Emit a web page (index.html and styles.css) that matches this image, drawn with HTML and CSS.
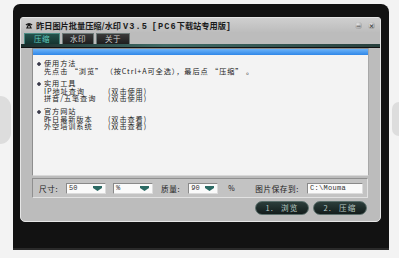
FILE: index.html
```html
<!DOCTYPE html>
<html lang="zh-CN">
<head>
    <meta charset="UTF-8">
    <title>昨日图片批量压缩/水印 V3.5</title>
    <link rel="stylesheet" href="styles.css">
</head>
<body>
    <div class="blob blob-left"></div>
    <div class="blob blob-right"></div>
    <div class="screen">
        <div class="window">
            <div class="titlebar">
                <svg class="app-icon" width="8" height="7" viewBox="0 0 8 7">
                    <path d="M0.5 2.5 Q4 -0.5 7.5 2.5 L6.5 3.5 L5.5 2.6 L5.5 3.4 L7 6.5 L1 6.5 L2.5 3.4 L2.5 2.6 L1.5 3.5 Z" fill="#1a1a1a"/>
                    <circle cx="4" cy="4.8" r="0.9" fill="#bbb"/>
                </svg>
                <span class="title">昨日图片批量压缩/水印 <span class="latin">V3.5</span>&nbsp;&nbsp;<span class="latin">[PC6</span>下载站专用版<span class="latin">]</span></span>
                <div class="win-btns">
                    <span class="win-btn">&minus;</span>
                    <span class="win-btn">&times;</span>
                </div>
            </div>
            <div class="tabs">
                <span class="tab active">压缩</span>
                <span class="tab">水印</span>
                <span class="tab">关于</span>
            </div>
            <div class="tabline"></div>

            <div class="list">
                <div class="list-head"></div>
                <div class="group">
                    <p class="heading"><span class="dot"></span>使用方法</p>
                    <p>先点击 “浏览” （按Ctrl+A可全选），最后点 “压缩” 。</p>
                </div>
                <div class="group">
                    <p class="heading"><span class="dot"></span>实用工具</p>
                    <p><span class="name">IP地址查询</span>(双击使用)</p>
                    <p><span class="name">拼音/五笔查询</span>(双击使用)</p>
                </div>
                <div class="group">
                    <p class="heading"><span class="dot"></span>官方网站</p>
                    <p><span class="name">昨日最新版本</span>(双击查看)</p>
                    <p><span class="name">外空培训系统</span>(双击查看)</p>
                </div>
            </div>

            <div class="controls">
                <span class="label">尺寸:</span>
                <span class="field w40">50<svg class="spin" width="9" height="5" viewBox="0 0 9 5"><path d="M0 0 H9 V2 L4.5 5 L0 2 Z" fill="#2c6a64"/></svg></span>
                <span class="field w40 gap7">%<svg class="spin" width="9" height="5" viewBox="0 0 9 5"><path d="M0 0 H9 V2 L4.5 5 L0 2 Z" fill="#2c6a64"/></svg></span>
                <span class="label gap8">质量:</span>
                <span class="field w29">90<svg class="spin" width="9" height="5" viewBox="0 0 9 5"><path d="M0 0 H9 V2 L4.5 5 L0 2 Z" fill="#2c6a64"/></svg></span>
                <span class="label gap10">%</span>
                <span class="label gap20">图片保存到:</span>
                <span class="field w56 path">C:\Mouma</span>
            </div>

            <div class="actions">
                <button class="btn">1. 浏览</button>
                <button class="btn">2. 压缩</button>
            </div>
        </div>
    </div>
</body>
</html>
```

FILE: styles.css
```css
body {
    margin: 0;
    width: 399px;
    height: 258px;
    overflow: hidden;
    background-color: #f3f3f3;
    font-family: "Noto Sans CJK SC", "DejaVu Sans", sans-serif;
    position: relative;
}
.blob {
    position: absolute;
    background-color: #dddddd;
}
.blob-left {
    left: 0;
    top: 96px;
    width: 11px;
    height: 48px;
    border-radius: 0 24px 24px 0;
}
.blob-right {
    right: 0;
    top: 102px;
    width: 7px;
    height: 34px;
    border-radius: 17px 0 0 17px;
}
.screen {
    position: relative;
    z-index: 1;
    margin: 4px 0 0 13px;
    width: 376px;
    height: 246px;
    box-sizing: border-box;
    padding: 13px 0 0 7px;
    background-color: #121212;
    border-radius: 7px 8px 0 0;
    border-bottom: 2px solid #2a2a2a;
}
.window {
    width: 361px;
    height: 205px;
    box-sizing: border-box;
    display: flex;
    flex-direction: column;
    background-color: #bcbcbc;
    border: 1px solid #e6e6e6;
    border-radius: 3px 3px 5px 5px;
}
.titlebar {
    height: 14px;
    display: flex;
    align-items: center;
    padding-left: 4px;
    background: linear-gradient(#cfcfcf, #bdbdbd);
}
.app-icon {
    margin-right: 3px;
}
.title {
    font-size: 8.2px;
    font-weight: bold;
    color: #1b1b1b;
    white-space: nowrap;
}
.title .latin {
    font-family: "Liberation Mono", monospace;
    font-size: 8.6px;
    letter-spacing: 1.1px;
}
.win-btns {
    margin-left: auto;
    margin-right: 5px;
    display: flex;
    gap: 6px;
}
.win-btn {
    width: 7px;
    height: 7px;
    border-radius: 50%;
    background: radial-gradient(circle at 40% 35%, #e4e4e4, #8c8c8c);
    color: #333;
    font-size: 6px;
    line-height: 7px;
    text-align: center;
    font-family: "DejaVu Sans", sans-serif;
    font-weight: bold;
}
.tabs {
    height: 11px;
    display: flex;
    align-items: flex-end;
    gap: 2px;
    padding-left: 3px;
    margin-top: 1px;
}
.tab {
    height: 11px;
    box-sizing: border-box;
    width: 32px;
    background: linear-gradient(#3a3a3a, #1e1e1e);
    border: 1px solid #6d7a78;
    border-bottom: none;
    color: #d4d4d4;
    font-size: 7.5px;
    line-height: 10px;
    text-align: center;
    letter-spacing: 0.5px;
}
.tab.active {
    width: 36px;
    background: linear-gradient(#24524c, #143430);
    color: #63d0c4;
    border-color: #4d8c84;
}
.tab:last-child {
    width: 34px;
}
.tabline {
    height: 3px;
    background: linear-gradient(to right, #1b2e2c, #3f6b66 40%, #28403d);
    border-bottom: 1px solid #111;
}
.list {
    margin: 0 11px 0 11px;
    height: 128px;
    box-sizing: border-box;
    background-color: #f3f3f3;
    border: 1px solid #8e8e8e;
    border-right-color: #a8a8a8;
    border-bottom-color: #d8d8d8;
    padding-left: 4px;
    padding-right: 4px;
}
.list-head {
    height: 6px;
    margin: 0 -4px;
    background: linear-gradient(#6db3f8, #2f87e8);
}
.group {
    margin-top: 5px;
}
.group:first-of-type {
    margin-top: 1px;
}
.list p {
    margin: 0;
    padding-left: 7px;
    font-size: 7.2px;
    line-height: 7.6px;
    height: 7.6px;
    color: #222;
    white-space: nowrap;
    letter-spacing: 0.9px;
    position: relative;
}
.dot {
    position: absolute;
    left: 0;
    top: 2px;
    width: 4px;
    height: 4px;
    background-color: #3a3a4a;
    transform: rotate(45deg) scale(0.85);
    border-radius: 1px;
}
.name {
    display: inline-block;
    width: 64px;
}
.controls {
    margin: 2px 12px 0 11px;
    height: 20px;
    box-sizing: border-box;
    display: flex;
    align-items: center;
    padding-left: 6px;
    background-color: #c3c3c3;
    border: 1px solid #8f8f8f;
    border-right-color: #e2e2e2;
    border-bottom-color: #e2e2e2;
    font-size: 7.6px;
    color: #222;
}
.label {
    white-space: nowrap;
    letter-spacing: 0.6px;
}
.field {
    height: 11px;
    box-sizing: border-box;
    display: flex;
    align-items: center;
    justify-content: space-between;
    padding: 0 2px;
    background-color: #fafafa;
    border: 1px solid #8a8a8a;
    border-right-color: #dcdcdc;
    border-bottom-color: #dcdcdc;
    font-family: "Liberation Mono", monospace;
    font-size: 7px;
    color: #333;
    margin-left: 8px;
}
.field .spin {
    margin-right: 1px;
}
.w40 {
    width: 40px;
}
.w29 {
    width: 30px;
}
.w56 {
    width: 56px;
}
.gap7 {
    margin-left: 7px;
}
.gap8 {
    margin-left: 8px;
}
.gap10 {
    margin-left: 10px;
    font-size: 7px;
}
.gap20 {
    margin-left: 20px;
}
.path {
    justify-content: flex-start;
    letter-spacing: 0.3px;
}
.actions {
    display: flex;
    justify-content: flex-end;
    gap: 4px;
    margin: 3px 13px 0 0;
}
.btn {
    width: 54px;
    height: 14px;
    padding: 0;
    border-radius: 7px;
    border: 1px solid #5b6f6c;
    background: linear-gradient(#2c3e3b, #121c1b);
    color: #b9c9c6;
    font-family: "Noto Sans CJK SC", sans-serif;
    font-size: 7.6px;
    line-height: 12px;
    letter-spacing: 1.2px;
    word-spacing: 4px;
}
```
